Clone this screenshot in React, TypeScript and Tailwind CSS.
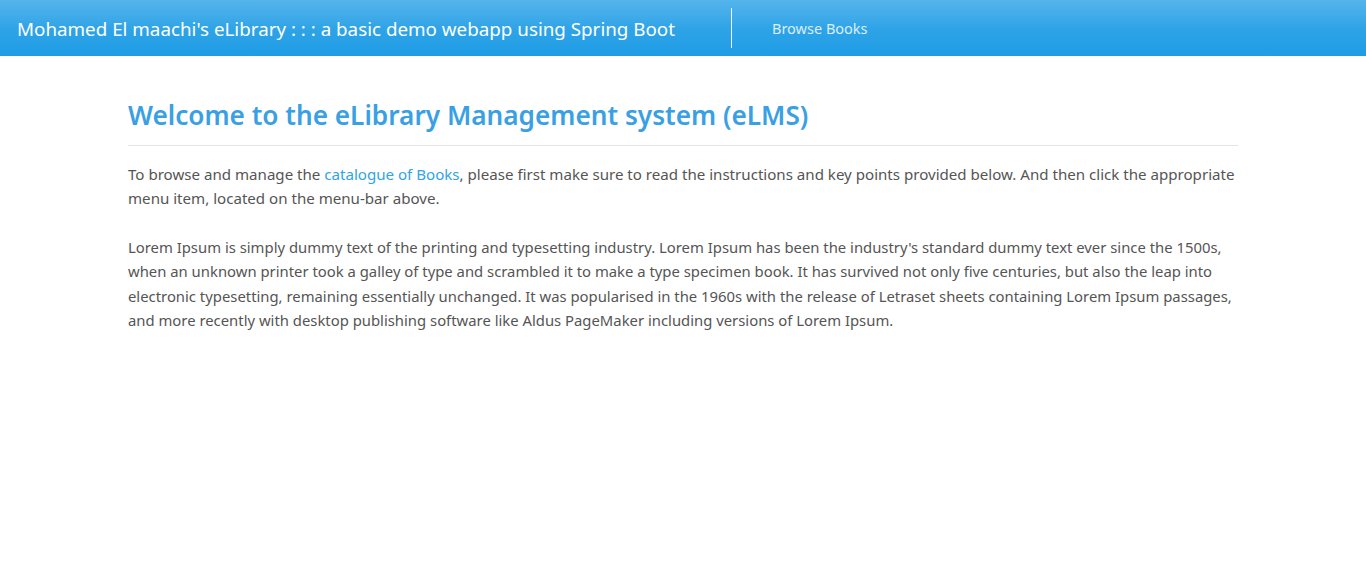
import React from "react";

export default function App() {
  const font = { fontFamily: '"Noto Sans", "Open Sans", Arial, sans-serif' };
  return (
    <div className="min-h-[576px] bg-white" style={font}>
      <nav className="h-[56px] bg-gradient-to-b from-[#54b4eb] via-[#2fa4e7] to-[#1d9ce5] flex items-center">
        <div className="pl-[17px] text-white text-[18.8px] leading-none w-[731px] whitespace-nowrap pt-[3px]">
          Mohamed El maachi's eLibrary : : : a basic demo webapp using Spring Boot
        </div>
        <div className="w-px h-[40px] bg-white" />
        <a className="ml-[40px] text-[#dbeefb] text-[14.5px] pt-[1px]">Browse Books</a>
      </nav>
      <main className="w-[1110px] mx-auto pt-[41px]">
        <h1 className="text-[#3aa0e4] text-[26.2px] font-semibold leading-[36px] pb-[12px] border-b border-[#e5e5e5]">
          Welcome to the eLibrary Management system (eLMS)
        </h1>
        <p className="mt-[16px] text-[#555555] text-[15.1px] leading-[24.4px]">
          To browse and manage the <a className="text-[#2fa4e7]">catalogue of Books</a>, please first make sure to read the instructions and key points provided below. And then click the appropriate menu item, located on the menu-bar above.
        </p>
        <p className="mt-[24px] text-[#555555] text-[14.85px] leading-[24.4px]">
          Lorem Ipsum is simply dummy text of the printing and typesetting industry. Lorem Ipsum has been the industry's standard dummy text ever since the 1500s, when an unknown printer took a galley of type and scrambled it to make a type specimen book. It has survived not only five centuries, but also the leap into electronic typesetting, remaining essentially unchanged. It was popularised in the 1960s with the release of Letraset sheets containing Lorem Ipsum passages, and more recently with desktop publishing software like Aldus PageMaker including versions of Lorem Ipsum.
        </p>
      </main>
    </div>
  );
}
